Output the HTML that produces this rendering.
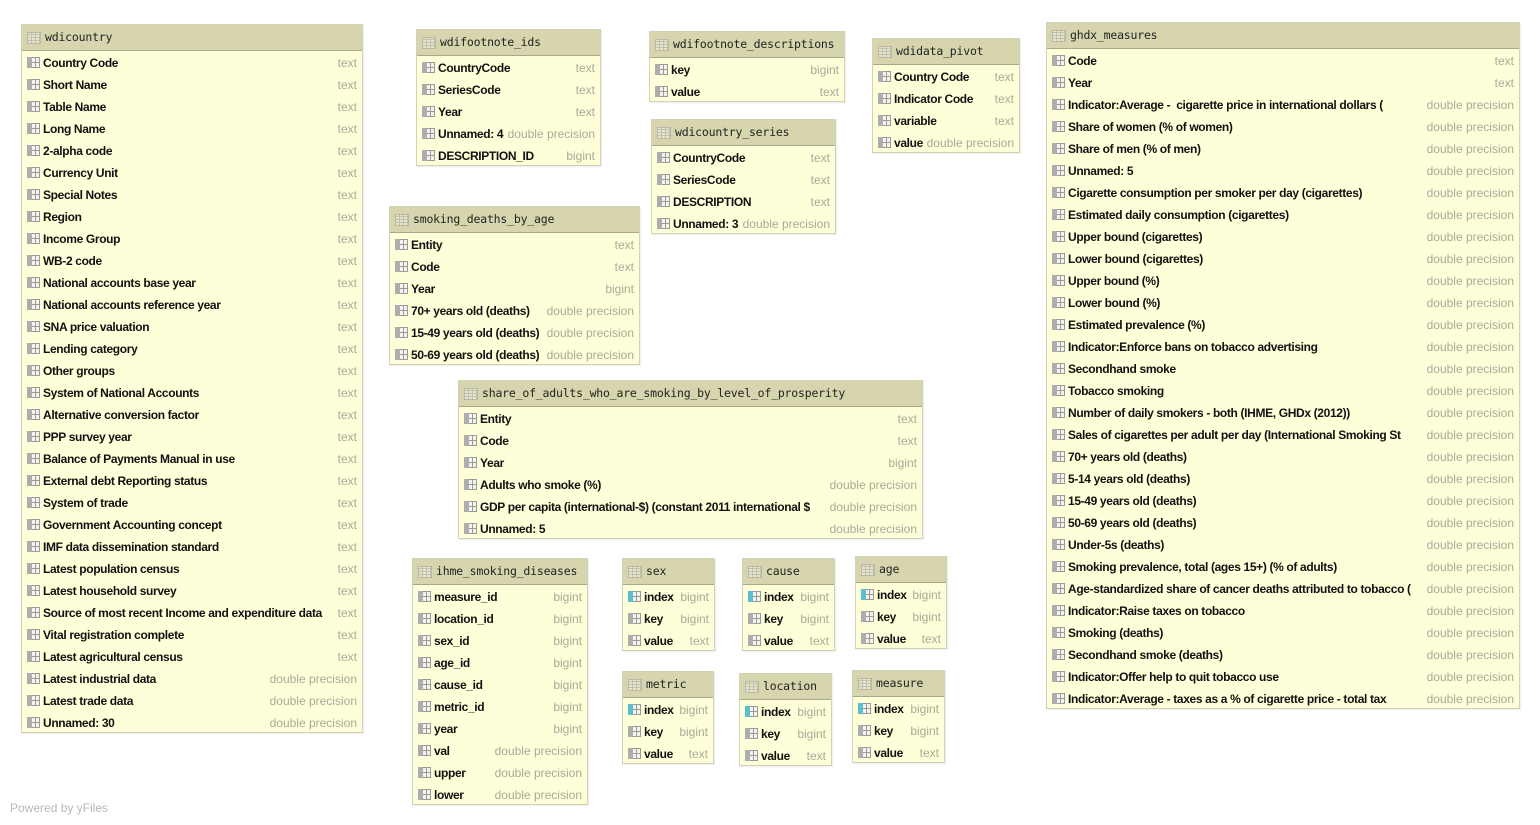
<!DOCTYPE html>
<html><head><meta charset="utf-8"><style>
body{margin:0;width:1540px;height:825px;background:#fff;position:relative;overflow:hidden;font-family:"Liberation Sans",Tahoma,sans-serif}
.t{position:absolute;background:#fefed8;border:1px solid #d2d2b4;box-sizing:border-box;box-shadow:1px 1px 1px rgba(0,0,0,.08)}
.h{height:25px;line-height:24px;background:#d6d5ad;border-bottom:1px solid #a9a888;font-family:"DejaVu Sans Mono","Liberation Mono",monospace;font-size:11.5px;letter-spacing:-0.2px;color:#222;padding-left:23px;position:relative;margin-bottom:1px;white-space:nowrap;overflow:hidden}
.h:before{content:"";position:absolute;left:5px;top:7px;width:12px;height:10px;border:1px solid #b9b8a6;background:repeating-linear-gradient(90deg,transparent 0 3px,#c2c1ae 3px 4px),repeating-linear-gradient(0deg,#e6e5cc 0 2px,#c2c1ae 2px 3px)}
.r{height:22px;line-height:22px;display:flex;padding:0 5px 0 5px;font-size:12px;white-space:nowrap}
.i{flex-shrink:0;width:8px;height:11px;margin:5px 3px 0 0;border-left:5px solid #adadad;background:linear-gradient(#9a9a9a,#9a9a9a) 0 0/8px 1px no-repeat,linear-gradient(#9a9a9a,#9a9a9a) 0 5px/8px 1px no-repeat,linear-gradient(#9a9a9a,#9a9a9a) 0 10px/8px 1px no-repeat,linear-gradient(#9a9a9a,#9a9a9a) 3px 0/1px 11px no-repeat,linear-gradient(#9a9a9a,#9a9a9a) 7px 0/1px 11px no-repeat,#f4f4ec}
.k .i{border-left-color:#5bbfd0}
.n{font-weight:bold;color:#111;flex:1;min-width:0;overflow:hidden;letter-spacing:-0.35px}
.y{color:#aaa99a;flex-shrink:0;padding-left:3px;text-align:right}
.pw{position:absolute;left:10px;top:801px;font-size:12px;color:#b8b8b8}
</style></head><body>

<div class="t" style="left:21px;top:24px;width:342px;height:709px"><div class="h">wdicountry</div>
<div class="r"><i class="i"></i><span class="n">Country Code</span><span class="y">text</span></div>
<div class="r"><i class="i"></i><span class="n">Short Name</span><span class="y">text</span></div>
<div class="r"><i class="i"></i><span class="n">Table Name</span><span class="y">text</span></div>
<div class="r"><i class="i"></i><span class="n">Long Name</span><span class="y">text</span></div>
<div class="r"><i class="i"></i><span class="n">2-alpha code</span><span class="y">text</span></div>
<div class="r"><i class="i"></i><span class="n">Currency Unit</span><span class="y">text</span></div>
<div class="r"><i class="i"></i><span class="n">Special Notes</span><span class="y">text</span></div>
<div class="r"><i class="i"></i><span class="n">Region</span><span class="y">text</span></div>
<div class="r"><i class="i"></i><span class="n">Income Group</span><span class="y">text</span></div>
<div class="r"><i class="i"></i><span class="n">WB-2 code</span><span class="y">text</span></div>
<div class="r"><i class="i"></i><span class="n">National accounts base year</span><span class="y">text</span></div>
<div class="r"><i class="i"></i><span class="n">National accounts reference year</span><span class="y">text</span></div>
<div class="r"><i class="i"></i><span class="n">SNA price valuation</span><span class="y">text</span></div>
<div class="r"><i class="i"></i><span class="n">Lending category</span><span class="y">text</span></div>
<div class="r"><i class="i"></i><span class="n">Other groups</span><span class="y">text</span></div>
<div class="r"><i class="i"></i><span class="n">System of National Accounts</span><span class="y">text</span></div>
<div class="r"><i class="i"></i><span class="n">Alternative conversion factor</span><span class="y">text</span></div>
<div class="r"><i class="i"></i><span class="n">PPP survey year</span><span class="y">text</span></div>
<div class="r"><i class="i"></i><span class="n">Balance of Payments Manual in use</span><span class="y">text</span></div>
<div class="r"><i class="i"></i><span class="n">External debt Reporting status</span><span class="y">text</span></div>
<div class="r"><i class="i"></i><span class="n">System of trade</span><span class="y">text</span></div>
<div class="r"><i class="i"></i><span class="n">Government Accounting concept</span><span class="y">text</span></div>
<div class="r"><i class="i"></i><span class="n">IMF data dissemination standard</span><span class="y">text</span></div>
<div class="r"><i class="i"></i><span class="n">Latest population census</span><span class="y">text</span></div>
<div class="r"><i class="i"></i><span class="n">Latest household survey</span><span class="y">text</span></div>
<div class="r"><i class="i"></i><span class="n">Source of most recent Income and expenditure data</span><span class="y">text</span></div>
<div class="r"><i class="i"></i><span class="n">Vital registration complete</span><span class="y">text</span></div>
<div class="r"><i class="i"></i><span class="n">Latest agricultural census</span><span class="y">text</span></div>
<div class="r"><i class="i"></i><span class="n">Latest industrial data</span><span class="y">double precision</span></div>
<div class="r"><i class="i"></i><span class="n">Latest trade data</span><span class="y">double precision</span></div>
<div class="r"><i class="i"></i><span class="n">Unnamed: 30</span><span class="y">double precision</span></div>
</div>

<div class="t" style="left:416px;top:29px;width:185px;height:137px"><div class="h">wdifootnote_ids</div>
<div class="r"><i class="i"></i><span class="n">CountryCode</span><span class="y">text</span></div>
<div class="r"><i class="i"></i><span class="n">SeriesCode</span><span class="y">text</span></div>
<div class="r"><i class="i"></i><span class="n">Year</span><span class="y">text</span></div>
<div class="r"><i class="i"></i><span class="n">Unnamed: 4</span><span class="y">double precision</span></div>
<div class="r"><i class="i"></i><span class="n">DESCRIPTION_ID</span><span class="y">bigint</span></div>
</div>

<div class="t" style="left:649px;top:31px;width:196px;height:71px"><div class="h">wdifootnote_descriptions</div>
<div class="r"><i class="i"></i><span class="n">key</span><span class="y">bigint</span></div>
<div class="r"><i class="i"></i><span class="n">value</span><span class="y">text</span></div>
</div>

<div class="t" style="left:872px;top:38px;width:148px;height:115px"><div class="h">wdidata_pivot</div>
<div class="r"><i class="i"></i><span class="n">Country Code</span><span class="y">text</span></div>
<div class="r"><i class="i"></i><span class="n">Indicator Code</span><span class="y">text</span></div>
<div class="r"><i class="i"></i><span class="n">variable</span><span class="y">text</span></div>
<div class="r"><i class="i"></i><span class="n">value</span><span class="y">double precision</span></div>
</div>

<div class="t" style="left:651px;top:119px;width:185px;height:115px"><div class="h">wdicountry_series</div>
<div class="r"><i class="i"></i><span class="n">CountryCode</span><span class="y">text</span></div>
<div class="r"><i class="i"></i><span class="n">SeriesCode</span><span class="y">text</span></div>
<div class="r"><i class="i"></i><span class="n">DESCRIPTION</span><span class="y">text</span></div>
<div class="r"><i class="i"></i><span class="n">Unnamed: 3</span><span class="y">double precision</span></div>
</div>

<div class="t" style="left:389px;top:206px;width:251px;height:159px"><div class="h">smoking_deaths_by_age</div>
<div class="r"><i class="i"></i><span class="n">Entity</span><span class="y">text</span></div>
<div class="r"><i class="i"></i><span class="n">Code</span><span class="y">text</span></div>
<div class="r"><i class="i"></i><span class="n">Year</span><span class="y">bigint</span></div>
<div class="r"><i class="i"></i><span class="n">70+ years old (deaths)</span><span class="y">double precision</span></div>
<div class="r"><i class="i"></i><span class="n">15-49 years old (deaths)</span><span class="y">double precision</span></div>
<div class="r"><i class="i"></i><span class="n">50-69 years old (deaths)</span><span class="y">double precision</span></div>
</div>

<div class="t" style="left:458px;top:380px;width:465px;height:159px"><div class="h">share_of_adults_who_are_smoking_by_level_of_prosperity</div>
<div class="r"><i class="i"></i><span class="n">Entity</span><span class="y">text</span></div>
<div class="r"><i class="i"></i><span class="n">Code</span><span class="y">text</span></div>
<div class="r"><i class="i"></i><span class="n">Year</span><span class="y">bigint</span></div>
<div class="r"><i class="i"></i><span class="n">Adults who smoke (%)</span><span class="y">double precision</span></div>
<div class="r"><i class="i"></i><span class="n">GDP per capita (international-$) (constant 2011 international $</span><span class="y">double precision</span></div>
<div class="r"><i class="i"></i><span class="n">Unnamed: 5</span><span class="y">double precision</span></div>
</div>

<div class="t" style="left:412px;top:558px;width:176px;height:247px"><div class="h">ihme_smoking_diseases</div>
<div class="r"><i class="i"></i><span class="n">measure_id</span><span class="y">bigint</span></div>
<div class="r"><i class="i"></i><span class="n">location_id</span><span class="y">bigint</span></div>
<div class="r"><i class="i"></i><span class="n">sex_id</span><span class="y">bigint</span></div>
<div class="r"><i class="i"></i><span class="n">age_id</span><span class="y">bigint</span></div>
<div class="r"><i class="i"></i><span class="n">cause_id</span><span class="y">bigint</span></div>
<div class="r"><i class="i"></i><span class="n">metric_id</span><span class="y">bigint</span></div>
<div class="r"><i class="i"></i><span class="n">year</span><span class="y">bigint</span></div>
<div class="r"><i class="i"></i><span class="n">val</span><span class="y">double precision</span></div>
<div class="r"><i class="i"></i><span class="n">upper</span><span class="y">double precision</span></div>
<div class="r"><i class="i"></i><span class="n">lower</span><span class="y">double precision</span></div>
</div>

<div class="t" style="left:622px;top:558px;width:93px;height:93px"><div class="h">sex</div>
<div class="r k"><i class="i"></i><span class="n">index</span><span class="y">bigint</span></div>
<div class="r"><i class="i"></i><span class="n">key</span><span class="y">bigint</span></div>
<div class="r"><i class="i"></i><span class="n">value</span><span class="y">text</span></div>
</div>
<div class="t" style="left:742px;top:558px;width:93px;height:93px"><div class="h">cause</div>
<div class="r k"><i class="i"></i><span class="n">index</span><span class="y">bigint</span></div>
<div class="r"><i class="i"></i><span class="n">key</span><span class="y">bigint</span></div>
<div class="r"><i class="i"></i><span class="n">value</span><span class="y">text</span></div>
</div>
<div class="t" style="left:855px;top:556px;width:92px;height:93px"><div class="h">age</div>
<div class="r k"><i class="i"></i><span class="n">index</span><span class="y">bigint</span></div>
<div class="r"><i class="i"></i><span class="n">key</span><span class="y">bigint</span></div>
<div class="r"><i class="i"></i><span class="n">value</span><span class="y">text</span></div>
</div>
<div class="t" style="left:622px;top:671px;width:92px;height:93px"><div class="h">metric</div>
<div class="r k"><i class="i"></i><span class="n">index</span><span class="y">bigint</span></div>
<div class="r"><i class="i"></i><span class="n">key</span><span class="y">bigint</span></div>
<div class="r"><i class="i"></i><span class="n">value</span><span class="y">text</span></div>
</div>
<div class="t" style="left:739px;top:673px;width:93px;height:93px"><div class="h">location</div>
<div class="r k"><i class="i"></i><span class="n">index</span><span class="y">bigint</span></div>
<div class="r"><i class="i"></i><span class="n">key</span><span class="y">bigint</span></div>
<div class="r"><i class="i"></i><span class="n">value</span><span class="y">text</span></div>
</div>
<div class="t" style="left:852px;top:670px;width:93px;height:93px"><div class="h">measure</div>
<div class="r k"><i class="i"></i><span class="n">index</span><span class="y">bigint</span></div>
<div class="r"><i class="i"></i><span class="n">key</span><span class="y">bigint</span></div>
<div class="r"><i class="i"></i><span class="n">value</span><span class="y">text</span></div>
</div>

<div class="t" style="left:1046px;top:22px;width:474px;height:687px"><div class="h">ghdx_measures</div>
<div class="r"><i class="i"></i><span class="n">Code</span><span class="y">text</span></div>
<div class="r"><i class="i"></i><span class="n">Year</span><span class="y">text</span></div>
<div class="r"><i class="i"></i><span class="n">Indicator:Average -&nbsp; cigarette price in international dollars (</span><span class="y">double precision</span></div>
<div class="r"><i class="i"></i><span class="n">Share of women (% of women)</span><span class="y">double precision</span></div>
<div class="r"><i class="i"></i><span class="n">Share of men (% of men)</span><span class="y">double precision</span></div>
<div class="r"><i class="i"></i><span class="n">Unnamed: 5</span><span class="y">double precision</span></div>
<div class="r"><i class="i"></i><span class="n">Cigarette consumption per smoker per day (cigarettes)</span><span class="y">double precision</span></div>
<div class="r"><i class="i"></i><span class="n">Estimated daily consumption (cigarettes)</span><span class="y">double precision</span></div>
<div class="r"><i class="i"></i><span class="n">Upper bound (cigarettes)</span><span class="y">double precision</span></div>
<div class="r"><i class="i"></i><span class="n">Lower bound (cigarettes)</span><span class="y">double precision</span></div>
<div class="r"><i class="i"></i><span class="n">Upper bound (%)</span><span class="y">double precision</span></div>
<div class="r"><i class="i"></i><span class="n">Lower bound (%)</span><span class="y">double precision</span></div>
<div class="r"><i class="i"></i><span class="n">Estimated prevalence (%)</span><span class="y">double precision</span></div>
<div class="r"><i class="i"></i><span class="n">Indicator:Enforce bans on tobacco advertising</span><span class="y">double precision</span></div>
<div class="r"><i class="i"></i><span class="n">Secondhand smoke</span><span class="y">double precision</span></div>
<div class="r"><i class="i"></i><span class="n">Tobacco smoking</span><span class="y">double precision</span></div>
<div class="r"><i class="i"></i><span class="n">Number of daily smokers - both (IHME, GHDx (2012))</span><span class="y">double precision</span></div>
<div class="r"><i class="i"></i><span class="n">Sales of cigarettes per adult per day (International Smoking St</span><span class="y">double precision</span></div>
<div class="r"><i class="i"></i><span class="n">70+ years old (deaths)</span><span class="y">double precision</span></div>
<div class="r"><i class="i"></i><span class="n">5-14 years old (deaths)</span><span class="y">double precision</span></div>
<div class="r"><i class="i"></i><span class="n">15-49 years old (deaths)</span><span class="y">double precision</span></div>
<div class="r"><i class="i"></i><span class="n">50-69 years old (deaths)</span><span class="y">double precision</span></div>
<div class="r"><i class="i"></i><span class="n">Under-5s (deaths)</span><span class="y">double precision</span></div>
<div class="r"><i class="i"></i><span class="n">Smoking prevalence, total (ages 15+) (% of adults)</span><span class="y">double precision</span></div>
<div class="r"><i class="i"></i><span class="n">Age-standardized share of cancer deaths attributed to tobacco (</span><span class="y">double precision</span></div>
<div class="r"><i class="i"></i><span class="n">Indicator:Raise taxes on tobacco</span><span class="y">double precision</span></div>
<div class="r"><i class="i"></i><span class="n">Smoking (deaths)</span><span class="y">double precision</span></div>
<div class="r"><i class="i"></i><span class="n">Secondhand smoke (deaths)</span><span class="y">double precision</span></div>
<div class="r"><i class="i"></i><span class="n">Indicator:Offer help to quit tobacco use</span><span class="y">double precision</span></div>
<div class="r"><i class="i"></i><span class="n">Indicator:Average - taxes as a % of cigarette price - total tax</span><span class="y">double precision</span></div>
</div>

<div class="pw">Powered by yFiles</div>
</body></html>
